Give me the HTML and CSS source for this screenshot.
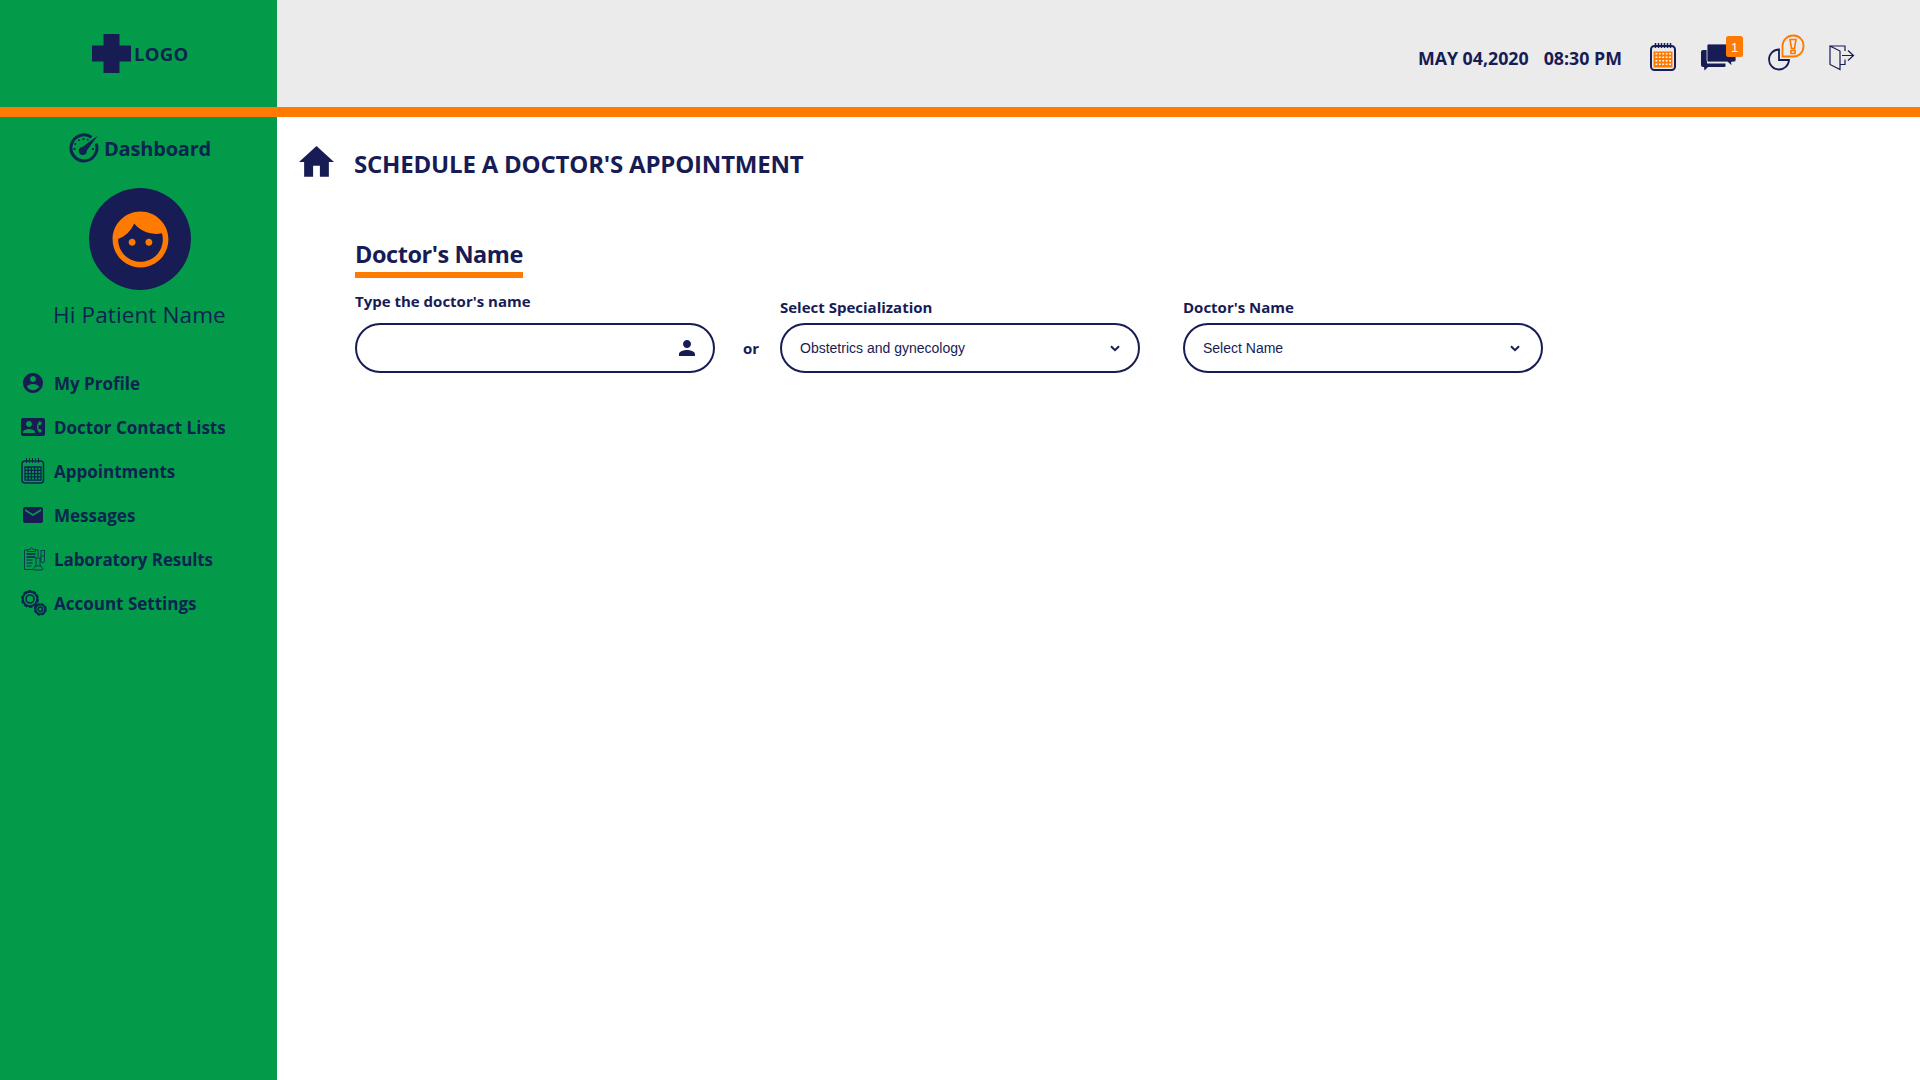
FILE: index.html
```html
<!DOCTYPE html>
<html lang="en">
<head>
<meta charset="utf-8">
<title>Schedule a Doctor's Appointment</title>
<link rel="stylesheet" href="styles.css">
</head>
<body>
<header class="header">
  <div class="brand">
    <svg class="brand-mark" viewBox="0 0 39 39"><path d="M11.500 0h16v11.500H39v16H27.500V39h-16V27.500H0v-16h11.500z"/></svg>
    <span class="brand-name">LOGO</span>
  </div>
  <div class="topbar">
    <span class="date">MAY 04,2020</span>
    <span class="time">08:30 PM</span>
    <svg class="ic-calendar" width="26" height="28" viewBox="0 0 26 28">
      <rect x="1" y="3" width="24" height="24" rx="3.500" fill="none" stroke="#171c55" stroke-width="2"/>
      <path d="M5.500 0v5M8.500 0v5M11.500 0v5M14.500 0v5M17.500 0v5M20.500 0v5" stroke="#171c55" stroke-width="1.500"/>
      <rect x="3.500" y="8.500" width="19" height="16" fill="#ff7a00"/>
      <path d="M5.500 10.800h16M5.500 14.300h16M5.500 17.800h16M5.500 21.300h16" stroke="#fff" stroke-width="1.500" stroke-dasharray="1.800 1.600"/>
    </svg>
    <svg class="ic-chat" width="43" height="36" viewBox="0 0 43 36">
      <path d="M3 14h4v13.500h18.500V30a1 1 0 0 1-1 1H8l-3.500 3.500L4 31H3a2 2 0 0 1-2-2V16a2 2 0 0 1 2-2z"/>
      <path d="M8.500 8H34a2 2 0 0 1 2 2v14a2 2 0 0 1-2 2h-2.500l.5 4-4.500-4h-19a1.500 1.500 0 0 1-1.500-1.500v-15A1.500 1.500 0 0 1 8.500 8z" stroke="#ebebeb" stroke-width=".8"/>
      <rect x="26" width="17" height="21" rx="2.500" fill="#ff7a00"/>
      <text x="34.500" y="15.500" text-anchor="middle" class="badge">1</text>
    </svg>
    <svg class="ic-alert" width="37" height="37" viewBox="0 0 37 37">
      <path d="M11 15.500A10 10 0 1 0 21 26H11z" fill="none" stroke="#171c55" stroke-width="1.800"/>
      <path d="M14.500 22.500V12a10.500 10.500 0 0 1 10.500-10.500h.5a10 10 0 0 1 10 10v1a10 10 0 0 1-10 10z" fill="none" stroke="#ff7a00" stroke-width="1.800"/>
      <path d="M22 5.500h6l-1.500 9h-3zM23 16.500h4v3h-4z" fill="none" stroke="#ff7a00" stroke-width="1.700"/>
    </svg>
    <svg class="ic-exit line" width="26" height="26" viewBox="0 0 26 26">
      <path d="M1 1l10 5v18.500L1 19.500zM1 1h15v5M16 14.500v5h-5M13 10.500h11.500M19 5.500l5.500 5-5.500 5"/>
    </svg>
  </div>
</header>
<div class="page">
  <aside class="sidebar">
    <div class="dash">
      <svg class="line gauge" width="30" height="30" viewBox="0 0 30 30">
        <path d="M22.500 4.300A13 13 0 1 0 27.200 10.500" stroke-width="3"/>
        <path d="M29 2.500L17.800 17.500a4 4 0 1 1-4.500-3.500z" fill="#0b2450" stroke="none"/>
        <path d="M4.500 16h2M5.500 10.500l1.500 1M9.500 6.500l1 1.500M14.500 5v2M19 6l-.5 1.500M23 16h2" stroke-width="1.800"/>
      </svg>
      <span class="dash-label">Dashboard</span>
    </div>
    <div class="avatar">
      <svg width="67" height="67" viewBox="0 0 24 24"><path fill="#ff7a00" d="M10.250 13c0 .69-.56 1.250-1.250 1.250S7.750 13.690 7.750 13s.56-1.250 1.250-1.250 1.250.56 1.250 1.250zM15 11.750c-.69 0-1.250.56-1.250 1.250s.56 1.250 1.250 1.250 1.250-.56 1.250-1.250-.56-1.250-1.250-1.250zm7 .25c0 5.520-4.480 10-10 10S2 17.520 2 12 6.480 2 12 2s10 4.480 10 10zm-2 0c0-.78-.12-1.530-.33-2.240-.7.150-1.420.24-2.170.24-3.130 0-5.920-1.440-7.760-3.690C8.690 8.870 6.600 10.880 4 11.860c.01.04 0 .09 0 .14 0 4.410 3.590 8 8 8s8-3.590 8-8z"/></svg>
    </div>
    <p class="greeting"><span>Hi Patient Name</span></p>
    <nav class="menu">
      <a class="item"><svg width="24" height="24" viewBox="0 0 24 24"><path d="M12 2C6.480 2 2 6.480 2 12s4.480 10 10 10 10-4.480 10-10S17.520 2 12 2zm0 3c1.660 0 3 1.340 3 3s-1.340 3-3 3-3-1.340-3-3 1.340-3 3-3zm0 14.200c-2.500 0-4.710-1.280-6-3.220.03-1.990 4-3.080 6-3.080 1.990 0 5.970 1.090 6 3.080-1.290 1.940-3.500 3.220-6 3.220z"/></svg><span>My Profile</span></a>
      <a class="item"><svg width="24" height="24" viewBox="0 0 24 24"><path d="M22 3H2C.9 3 0 3.900 0 5v14c0 1.100.9 2 2 2h20c1.100 0 1.990-.9 1.990-2L24 5c0-1.100-.9-2-2-2zM8 6c1.660 0 3 1.340 3 3s-1.340 3-3 3-3-1.340-3-3 1.340-3 3-3zm6 12H2v-1c0-2 4-3.100 6-3.100s6 1.100 6 3.100v1zm3.850-4h1.640L21 16l-1.990 1.990c-1.310-.98-2.280-2.380-2.730-3.990-.18-.64-.28-1.310-.28-2s.1-1.360.28-2c.45-1.620 1.420-3.010 2.730-3.990L21 8l-1.510 2h-1.640c-.22.630-.35 1.300-.35 2s.13 1.370.35 2z"/></svg><span>Doctor Contact Lists</span></a>
      <a class="item"><svg class="line" width="24" height="26" viewBox="0 0 24 26"><rect x="1" y="3" width="21.500" height="22" rx="3" stroke-width="1.500"/><path d="M5.500 0v5M8.500 0v5M11.500 0v5M14.500 0v5M17.500 0v5"/><path d="M3.500 9h17M3.500 12.300h17M3.500 15.600h17M3.500 18.900h17M3.500 22.200h17M4 8.500v14M7.200 8.500v14M10.400 8.500v14M13.600 8.500v14M16.800 8.500v14M20 8.500v14" stroke-width="1.300"/></svg><span>Appointments</span></a>
      <a class="item"><svg width="24" height="24" viewBox="0 0 24 24"><path d="M20 4H4c-1.100 0-1.990.9-1.990 2L2 18c0 1.100.9 2 2 2h16c1.100 0 2-.9 2-2V6c0-1.100-.9-2-2-2zm0 4l-8 5-8-5V6l8 5 8-5v2z"/></svg><span>Messages</span></a>
      <a class="item"><svg class="line lab" width="24" height="24" viewBox="0 0 24 24"><path d="M7 3H3.500v19.500H12M14 3h3v7M6.500 4.500v-2H9a1.500 1.500 0 0 1 3 0h2.500v2zM5.500 19h5M19.500 3.500H24M20 3.500V14a1.700 1.700 0 0 0 3.500 0V3.500M20 9h3.500M14 11h6M15 11v7l-2.300 3.500q-.5 1.500 1 1.500h7q1.500 0 1-1.500L19 18v-7M14 19h6"/><path d="M5.500 7h9M5.500 10h9" stroke-width="1.500"/><path d="M5.500 13h6M5.500 16h6" stroke-width="1.200"/></svg><span class="tight">Laboratory Results</span></a>
      <a class="item"><svg class="line gears" width="26" height="26" viewBox="0 0 26 26"><circle cx="9" cy="9" r="7.200" stroke-width="2"/><circle cx="9" cy="9" r="8.300" stroke-width="1.300" stroke-dasharray="3.700 1.515"/><circle cx="9" cy="9" r="4" stroke-width="1.600"/><circle cx="19.300" cy="19.300" r="4.800" stroke-width="2"/><circle cx="19.300" cy="19.300" r="5.800" stroke-width="1.300" stroke-dasharray="3.100 1.455"/><circle cx="19.300" cy="19.300" r="2.200" stroke-width="1.600"/></svg><span>Account Settings</span></a>
    </nav>
  </aside>
  <main class="main">
    <div class="title-row">
      <svg class="home" width="35" height="31" viewBox="0 0 34 31" preserveAspectRatio="none"><path d="M17 0l17 16H29v14.800h-8.700v-11h-6.600v11H5V16H0z"/></svg>
      <h1 class="title"><span>SCHEDULE A DOCTOR'S APPOINTMENT</span></h1>
    </div>
    <h2 class="section"><span>Doctor's Name</span></h2>
    <form class="fields">
      <div class="field">
        <label class="label raised"><span>Type the doctor's name</span></label>
        <div class="pill">
          <svg class="person" width="24" height="24" viewBox="0 0 24 24"><path d="M12 12c2.210 0 4-1.790 4-4s-1.790-4-4-4-4 1.790-4 4 1.790 4 4 4zm0 2c-2.670 0-8 1.340-8 4v2h16v-2c0-2.660-5.330-4-8-4z"/></svg>
        </div>
      </div>
      <span class="or">or</span>
      <div class="field">
        <label class="label"><span>Select Specialization</span></label>
        <div class="pill"><span>Obstetrics and gynecology</span>
          <svg class="chevron" width="10" height="7" viewBox="0 0 10 7"><path d="M1 1.200l4 4 4-4"/></svg>
        </div>
      </div>
      <div class="field last">
        <label class="label"><span>Doctor's Name</span></label>
        <div class="pill"><span>Select Name</span>
          <svg class="chevron" width="10" height="7" viewBox="0 0 10 7"><path d="M1 1.200l4 4 4-4"/></svg>
        </div>
      </div>
    </form>
  </main>
</div>
</body>
</html>
```
FILE: styles.css
```css
* { box-sizing: border-box; margin: 0; padding: 0; }
body { height: 1080px; display: flex; flex-direction: column; background: #fff; color: #171c55; font-family: "Open Sans", sans-serif; font-weight: 700; overflow: hidden; }
svg { display: block; flex: none; fill: #171c55; overflow: visible; }
svg.line { fill: none; stroke: #0b2450; }
span, h1 { white-space: nowrap; }
.header { display: flex; height: 117px; border-bottom: 10px solid #ff7a00; }
.brand { width: 277px; background: #039b49; display: flex; align-items: center; padding-left: 92px; gap: 3px; }
.brand-mark { width: 39px; height: 39px; }
.brand-name { font-size: 18.500px; line-height: 24px; letter-spacing: .3px; color: #0b2450; }
.topbar { flex: 1; background: #ebebeb; display: flex; align-items: flex-start; justify-content: flex-end; padding-right: 65px; }
.date, .time { font-size: 17.800px; line-height: 24px; margin-top: 46px; }
.time { margin-left: 15px; }
.ic-calendar { margin: 43px 0 0 28px; }
.ic-chat { margin: 36px 0 0 24px; }
.ic-alert { margin: 34px 0 0 25px; }
svg.ic-exit { margin: 45px 0 0 24px; stroke: #171c55; stroke-width: 1.200; }
.badge { font: 400 13px "Liberation Sans", Arial, sans-serif; fill: #fff; }
.page { flex: 1; display: flex; }
.sidebar { width: 277px; background: #039b49; color: #0b2450; padding-top: 15px; }
.dash { display: flex; align-items: center; gap: 5px; height: 31px; padding-left: 69px; }
.dash-label { font-size: 20px; line-height: 30px; letter-spacing: -.2px; padding-top: 2px; }
.avatar { width: 102px; height: 102px; margin: 25px 0 0 89px; border-radius: 50%; background: #171c55; display: flex; align-items: center; justify-content: center; }
.greeting { margin: 9px 0 0 53px; font-size: 22.500px; line-height: 32px; font-weight: 400; letter-spacing: .12px; }
.menu { margin-top: 30px; padding-left: 21px; }
.item { display: flex; align-items: center; height: 44px; font-size: 17px; gap: 9px; }
.tight { letter-spacing: -.1px; }
.lab { stroke-width: .8; }
.gears { margin-right: -2px; }
.main { flex: 1; padding: 29px 0 0 22px; }
.title-row { display: flex; align-items: flex-start; }
.title { font-size: 24px; line-height: 36px; margin-left: 20px; letter-spacing: -.2px; }
.section { margin: 52px 0 0 56px; width: 168px; height: 44px; font-size: 23.500px; line-height: 40px; letter-spacing: -.45px; border-bottom: 6px solid #ff7a00; }
.fields { display: flex; align-items: flex-end; margin: 13px 0 0 56px; }
.field { width: 360px; }
.label { display: block; font-size: 15px; line-height: 20px; margin-bottom: 6px; }
.label.raised { margin-bottom: 12px; }
.last { margin-left: 43px; }
.last .chevron { margin-right: 7px; }
.pill { display: flex; align-items: center; justify-content: space-between; height: 50px; border: 2px solid #171c55; border-radius: 25px; padding: 0 14px 0 18px; font: 400 14px "Liberation Sans", Arial, sans-serif; }
.or { width: 65px; padding-left: 28px; font-size: 15px; line-height: 50px; }
.person { margin-left: auto; }
.chevron { margin-right: 4px; fill: none; stroke: #171c55; stroke-width: 2; }
```
